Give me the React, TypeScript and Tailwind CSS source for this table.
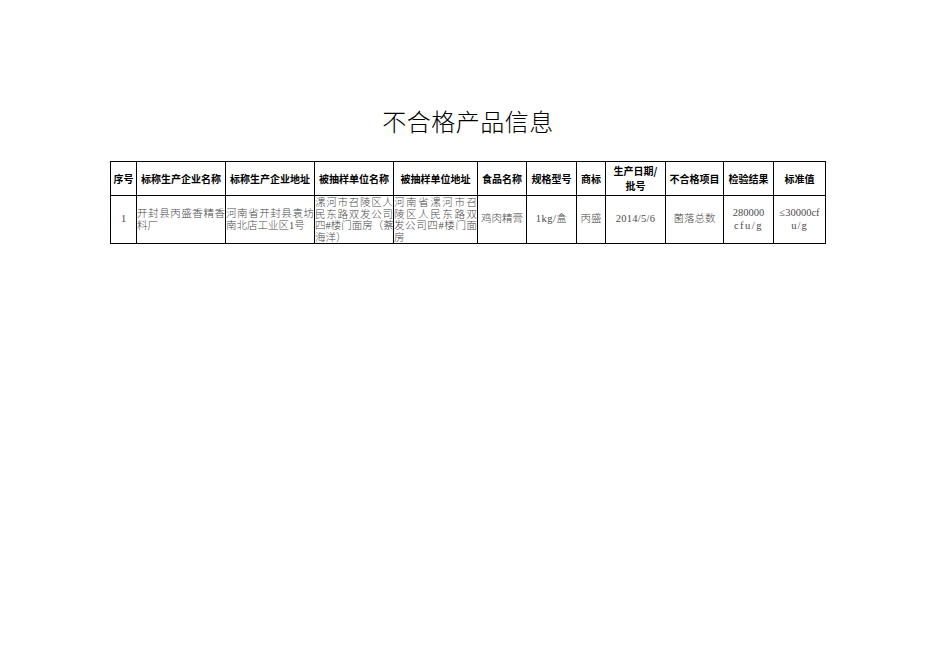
import React from "react";

const widths = [26, 89, 89, 79, 84, 49, 50, 29, 60, 58, 50, 52];

const headers: React.ReactNode[] = [
  "序号",
  "标称生产企业名称",
  "标称生产企业地址",
  "被抽样单位名称",
  "被抽样单位地址",
  "食品名称",
  "规格型号",
  "商标",
  <div className="flex flex-col items-center leading-[14.5px]">
    <span>生产日期/</span>
    <span>批号</span>
  </div>,
  "不合格项目",
  "检验结果",
  "标准值",
];

const dataFont = {
  fontFamily: '"Liberation Serif", "Noto Sans CJK SC", serif',
};

function Lines({ lines, center }: { lines: string[]; center?: boolean }) {
  return (
    <div
      className={`flex h-[47px] overflow-hidden ${center ? "items-center" : "items-start pt-[1px]"}`}
    >
      <div className="w-full text-[10.5px] leading-[11.7px] font-light text-[#4a4a4a]">
        {lines.map((l, i) => (
          <div
            key={i}
            className={
              i < lines.length - 1
                ? "whitespace-nowrap text-justify [text-align-last:justify]"
                : "whitespace-nowrap text-left"
            }
            style={{ textJustify: "inter-character" }}
          >
            {l}
          </div>
        ))}
      </div>
    </div>
  );
}

function Center({ children }: { children: React.ReactNode }) {
  return (
    <div className="flex h-[47px] items-center justify-center text-center text-[10.5px] leading-[12.5px] font-light text-[#4a4a4a]">
      <div>{children}</div>
    </div>
  );
}

export default function App() {
  return (
    <div className="min-h-[662px] w-[936px] bg-white" lang="zh-CN">
      <div className="pl-[110px] pt-[105px]">
        <div className="w-[716px] text-center">
          <h1
            className="text-[24px] leading-[32px] font-light text-black tracking-[0.5px]"
            style={{ fontFamily: '"Noto Sans CJK SC", sans-serif' }}
          >
            不合格产品信息
          </h1>
        </div>
        <table className="mt-[24px] w-[716px] table-fixed border-collapse border border-black">
          <colgroup>
            {widths.map((w, i) => (
              <col key={i} style={{ width: w }} />
            ))}
          </colgroup>
          <thead>
            <tr className="h-[34px]">
              {headers.map((h, i) => (
                <th
                  key={i}
                  className="border border-black p-0 text-center align-middle text-[10px] leading-[13px] font-bold text-black whitespace-nowrap"
                  style={{ fontFamily: '"Noto Sans CJK SC", sans-serif' }}
                >
                  {h}
                </th>
              ))}
            </tr>
          </thead>
          <tbody style={dataFont}>
            <tr className="h-[48px]">
              <td className="border border-black p-0 align-middle">
                <Center>1</Center>
              </td>
              <td className="border border-black p-0 align-top">
                <Lines lines={["开封县丙盛香精香", "料厂"]} center />
              </td>
              <td className="border border-black p-0 align-top">
                <Lines lines={["河南省开封县袁坊", "南北店工业区1号"]} center />
              </td>
              <td className="border border-black p-0 align-top">
                <Lines
                  lines={["漯河市召陵区人", "民东路双发公司", "四#楼门面房（蔡", "海洋）"]}
                />
              </td>
              <td className="border border-black p-0 align-top">
                <Lines
                  lines={["河南省漯河市召", "陵区人民东路双", "发公司四#楼门面", "房"]}
                />
              </td>
              <td className="border border-black p-0 align-middle">
                <Center>鸡肉精膏</Center>
              </td>
              <td className="border border-black p-0 align-middle">
                <Center>
                  <span className="tracking-[0.5px]">1kg/盒</span>
                </Center>
              </td>
              <td className="border border-black p-0 align-middle">
                <Center>丙盛</Center>
              </td>
              <td className="border border-black p-0 align-middle">
                <Center>
                  <span className="tracking-[0.3px]">2014/5/6</span>
                </Center>
              </td>
              <td className="border border-black p-0 align-middle">
                <Center>菌落总数</Center>
              </td>
              <td className="border border-black p-0 align-middle">
                <Center>
                  280000
                  <br />
                  <span className="tracking-[1.5px]">cfu/g</span>
                </Center>
              </td>
              <td className="border border-black p-0 align-middle">
                <Center>
                  ≤30000cf
                  <br />
                  <span className="tracking-[1px]">u/g</span>
                </Center>
              </td>
            </tr>
          </tbody>
        </table>
      </div>
    </div>
  );
}
